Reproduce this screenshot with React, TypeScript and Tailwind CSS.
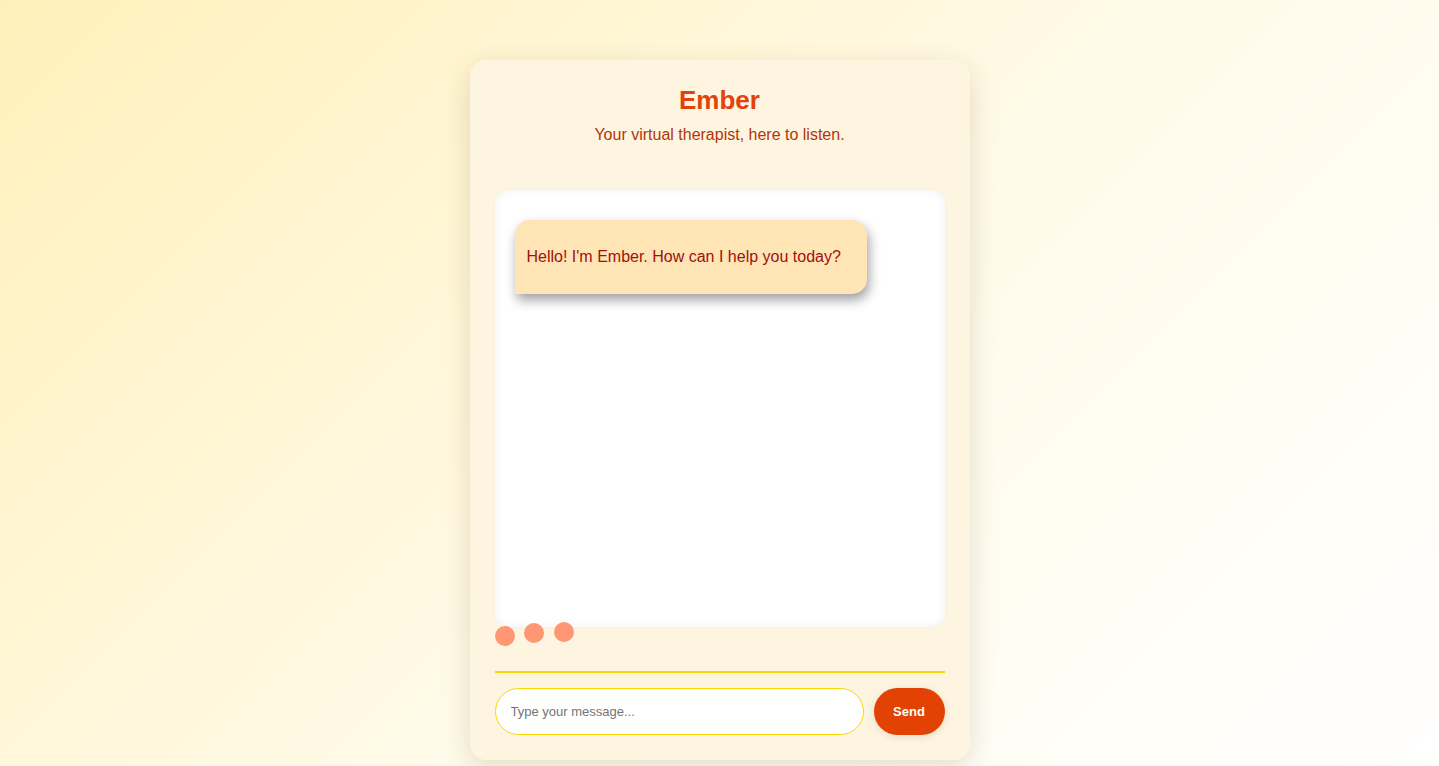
export default function App() {
  return (
    <div className="min-h-screen w-full bg-[linear-gradient(135deg,#fff0bb_0%,#fffbea_55%,#ffffff_100%)] flex justify-center pt-[60px] font-['Liberation_Sans',Arial,sans-serif]">
      {/* チャットカード */}
      <div className="w-[500px] h-[700px] bg-[#fdf5df] rounded-2xl shadow-[0_8px_28px_rgba(80,60,0,0.16)] px-[25px] pt-[25px] pb-[25px] flex flex-col">
        <div className="text-center">
          <h1 className="text-[26px] leading-[30px] font-bold text-[#e2430a]">Ember</h1>
          <p className="mt-[11px] text-[16px] leading-[18px] text-[#b3360b]">
            Your virtual therapist, here to listen.
          </p>
        </div>

        {/* メッセージ一覧 */}
        <div className="mt-[46px] h-[437px] bg-white rounded-[14px] shadow-[inset_0_0_10px_rgba(0,0,0,0.06),0_0_4px_rgba(0,0,0,0.03)] px-5 pt-[30px]">
          <div className="w-[352px] h-[74px] bg-[#ffe4b5] rounded-[15px] rounded-bl-none shadow-[2px_6px_12px_rgba(0,0,0,0.38)] flex items-center px-3">
            <span className="text-[16px] text-[#a0100f]">Hello! I'm Ember. How can I help you today?</span>
          </div>
        </div>

        {/* 入力中インジケーター */}
        <div className="flex h-[20px] -mt-[5px]">
          <span className="w-5 h-5 rounded-full bg-[#ff9774] mt-[4px]" />
          <span className="w-5 h-5 rounded-full bg-[#ff9774] mt-[1px] ml-[9px]" />
          <span className="w-5 h-5 rounded-full bg-[#ff9774] ml-[10px]" />
        </div>

        <div className="mt-[29px] h-[2px] bg-[#ffd700]" />

        {/* 入力欄 */}
        <div className="mt-[15px] flex gap-[10px]">
          <input
            className="flex-1 h-[47px] rounded-full border border-[#ffd700] bg-white px-[15px] text-[13px] text-gray-700 placeholder:text-[#757575] outline-none"
            placeholder="Type your message..."
          />
          <button className="w-[71px] h-[47px] rounded-full bg-[#e24203] text-white text-[13px] font-bold shadow-[0_2px_8px_rgba(0,0,0,0.1)]">
            Send
          </button>
        </div>
      </div>
    </div>
  )
}
